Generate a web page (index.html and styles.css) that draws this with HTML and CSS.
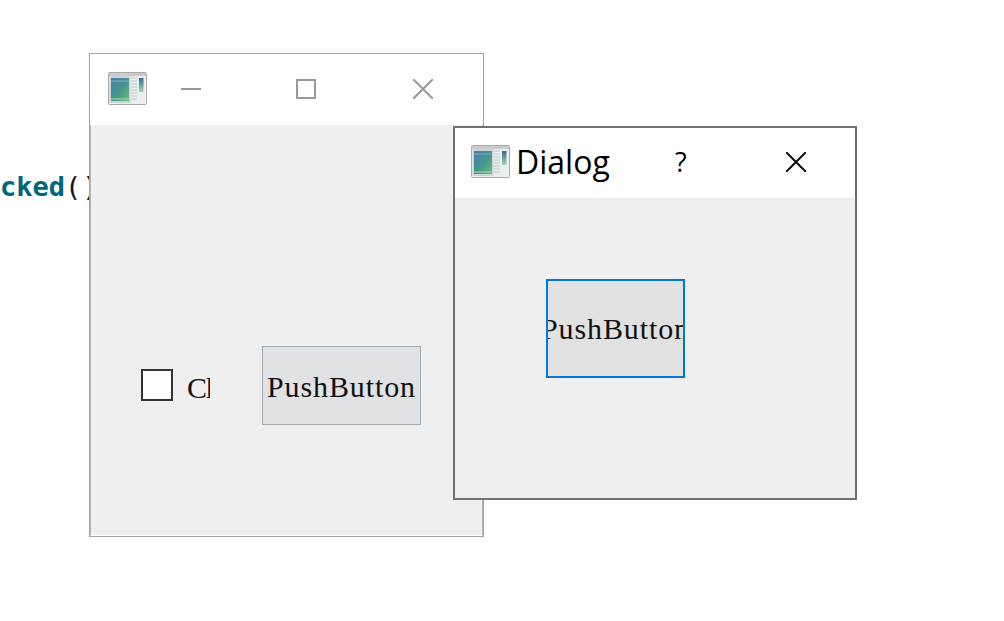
FILE: index.html
```html
<!DOCTYPE html>
<html lang="en">
<head>
<meta charset="utf-8">
<title>Dialog</title>
<link rel="stylesheet" href="styles.css">
</head>
<body>
<svg class="defs" width="0" height="0" aria-hidden="true">
  <defs>
    <linearGradient id="paneGrad" x1="0" y1="0" x2="1" y2="1">
      <stop offset="0" stop-color="#467ea8"/>
      <stop offset="0.55" stop-color="#45998a"/>
      <stop offset="1" stop-color="#70bd7c"/>
    </linearGradient>
    <linearGradient id="sideGrad" x1="0" y1="0" x2="0" y2="1">
      <stop offset="0" stop-color="#2f6f96"/>
      <stop offset="1" stop-color="#a8d4ae"/>
    </linearGradient>
    <symbol id="appIcon" viewBox="0 0 39 33">
      <rect x="0.5" y="0.5" width="38" height="32" rx="1" fill="#eceeef" stroke="#a8abae"/>
      <rect x="1" y="1" width="37" height="3" fill="#c9cbcf"/>
      <rect x="1.5" y="4" width="21" height="27" fill="#d0d3d6"/>
      <rect x="3" y="6" width="18" height="23" fill="url(#paneGrad)"/>
      <path d="M3 9h18" stroke="#82abc8" stroke-width="1"/>
      <path d="M3 27h18" stroke="#a8dca0" stroke-width="1"/>
      <path d="M23 6h6M23 9h6M23 12h6M23 15h6M23 18h6M23 21h6M23 24h6M23 27h6" stroke="#c2c5c8" stroke-width="1.2"/>
      <rect x="31" y="6" width="4.5" height="14" fill="url(#sideGrad)"/>
    </symbol>
  </defs>
</svg>

<main class="desktop">
  <div class="code-line"><span class="code-fn">cked</span><span class="code-paren">()</span></div>

  <section class="window window-main">
    <header class="titlebar titlebar-main">
      <svg class="app-icon"><use href="#appIcon"/></svg>
      <svg class="ctl ctl-min" viewBox="0 0 20 20"><path d="M0 10h20" stroke="#999" stroke-width="2"/></svg>
      <svg class="ctl ctl-max" viewBox="0 0 20 20"><rect x="1" y="1" width="18" height="18" fill="none" stroke="#999" stroke-width="2"/></svg>
      <svg class="ctl ctl-close" viewBox="0 0 20 20"><path d="M0 0L20 20M20 0L0 20" stroke="#999" stroke-width="2"/></svg>
    </header>
    <div class="client client-main">
      <span class="checkbox"></span>
      <span class="check-label">CheckBox</span>
      <button class="push push-main" type="button"><span class="push-text">PushButton</span></button>
    </div>
  </section>

  <section class="window window-dialog">
    <header class="titlebar titlebar-dialog">
      <svg class="app-icon"><use href="#appIcon"/></svg>
      <span class="dialog-title">Dialog</span>
      <span class="help">?</span>
      <svg class="ctl ctl-dialog-close" viewBox="0 0 20 20"><path d="M0 0L20 20M20 0L0 20" stroke="#111" stroke-width="2"/></svg>
    </header>
    <div class="client client-dialog">
      <button class="push push-dialog" type="button"><span class="push-text">PushButton</span></button>
    </div>
  </section>
</main>
</body>
</html>
```
FILE: styles.css
```css
html, body {
  margin: 0;
  padding: 0;
  background: #fff;
}

.defs {
  position: absolute;
}

.desktop {
  position: relative;
  width: 1004px;
  height: 621px;
  overflow: hidden;
}

.code-line {
  position: absolute;
  left: 0;
  top: 172px;
  font-family: "DejaVu Sans Mono", monospace;
  font-size: 27px;
  line-height: 30px;
  white-space: nowrap;
}

.code-fn {
  font-weight: 700;
  color: #00677c;
}

.code-paren {
  color: #10131c;
  letter-spacing: 1px;
}

.window {
  position: absolute;
  box-sizing: border-box;
  display: flex;
  flex-direction: column;
  background: #fff;
}

.window-main {
  left: 89px;
  top: 53px;
  width: 395px;
  height: 484px;
  border: 1px solid #a5a5a5;
}

.window-dialog {
  left: 453px;
  top: 126px;
  width: 404px;
  height: 374px;
  border: 2px solid #707070;
}

.titlebar {
  display: flex;
  align-items: center;
  box-sizing: border-box;
  flex: none;
  background: #fff;
}

.titlebar-main {
  height: 71px;
  padding: 0 0 1px 18px;
}

.titlebar-dialog {
  height: 70px;
  padding: 0 0 2px 16px;
}

.app-icon {
  display: block;
  flex: none;
  width: 39px;
  height: 33px;
  margin-top: -1px;
  filter: blur(0.5px);
}

.ctl {
  display: block;
  flex: none;
  width: 20px;
  height: 20px;
}

.ctl-min { margin-left: 34px; }
.ctl-max { margin-left: 95px; }
.ctl-close { margin-left: 97px; }
.ctl-dialog-close { margin-left: 100px; }

.dialog-title {
  margin-left: 6px;
  width: 159px;
  font-family: "Open Sans", sans-serif;
  font-size: 32px;
  line-height: 40px;
  color: #000;
}

.help {
  width: 11px;
  font-family: "Open Sans", sans-serif;
  font-size: 27px;
  line-height: 30px;
  color: #000;
}

.client {
  flex: 1;
  box-sizing: border-box;
  background: #efefef;
}

.client-main {
  display: flex;
  align-items: flex-start;
  height: 0;
  padding: 221px 0 0 50px;
  border-left: 1px solid #b4b4b4;
  border-right: 1px solid #b4b4b4;
  border-bottom: 1px solid #fff;
}

.client-dialog {
  padding: 81px 0 0 91px;
}

.checkbox {
  box-sizing: border-box;
  flex: none;
  width: 32px;
  height: 32px;
  margin-top: 23px;
  border: 2px solid #333;
  background: #fff;
}

.check-label {
  flex: none;
  width: 23px;
  margin-left: 14px;
  margin-top: 24px;
  overflow: hidden;
  white-space: nowrap;
  font-family: "Liberation Serif", serif;
  font-size: 30px;
  line-height: 36px;
  letter-spacing: -1px;
  color: #111;
}

.push {
  display: flex;
  align-items: center;
  justify-content: center;
  box-sizing: border-box;
  flex: none;
  padding: 0;
  overflow: hidden;
  white-space: nowrap;
  font-family: "Liberation Serif", serif;
  font-size: 30px;
  letter-spacing: 0.9px;
  color: #111;
}

.push-text {
  flex: none;
}

.push-main {
  width: 159px;
  height: 79px;
  margin-left: 52px;
  padding-top: 3px;
  border: 1px solid #a3abb2;
  background: #e1e2e4;
}

.push-dialog {
  width: 139px;
  height: 99px;
  padding-top: 1px;
  border: 2px solid #0078d7;
  background: #e1e1e1;
}
```
